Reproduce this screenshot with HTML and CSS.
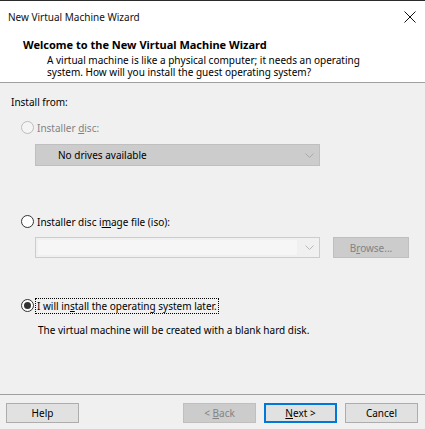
FILE: index.html
```html
<!DOCTYPE html>
<html>
<head>
<meta charset="utf-8">
<link rel="stylesheet" href="styles.css">
</head>
<body>
<div class="window">
  <div class="titlebar">
    <span class="title">New Virtual Machine Wizard</span>
    <svg class="close" width="12" height="12" viewBox="0 0 12 12"><path d="M0.5 0.5 L11.5 11.5 M11.5 0.5 L0.5 11.5" stroke="#111" stroke-width="1" fill="none"/></svg>
  </div>
  <div class="header">
    <div class="welcome">Welcome to the New Virtual Machine Wizard</div>
    <div class="desc">A virtual machine is like a physical computer; it needs an operating<br>system. How will you install the guest operating system?</div>
  </div>
  <div class="content">
    <div class="section-label">Install from:</div>

    <div class="radio-row disabled r1">
      <span class="radio"></span>
      <span class="label">Installer <u>d</u>isc:</span>
    </div>
    <div class="select disabled-select">
      <span class="select-text">No drives available</span>
      <svg class="chev" width="9" height="5" viewBox="0 0 9 5"><polyline points="0.5,0.5 4.5,4.5 8.5,0.5" fill="none" stroke="#a8a8a8" stroke-width="1"/></svg>
    </div>

    <div class="radio-row r2">
      <span class="radio"></span>
      <span class="label">Installer disc i<u>m</u>age file (iso):</span>
    </div>
    <div class="iso-row">
      <div class="combo">
        <div class="combo-edit"></div>
        <svg class="chev" width="9" height="5" viewBox="0 0 9 5"><polyline points="0.5,0.5 4.5,4.5 8.5,0.5" fill="none" stroke="#b8b8b8" stroke-width="1"/></svg>
      </div>
      <div class="btn btn-disabled browse"><span>B<u>r</u>owse...</span></div>
    </div>

    <div class="radio-row r3">
      <span class="radio checked"></span>
      <span class="label focus">I will in<u>s</u>tall the operating system later.</span>
    </div>
    <div class="later-desc">The virtual machine will be created with a blank hard disk.</div>
  </div>
  <div class="footer">
    <div class="btn help"><span>Help</span></div>
    <div class="spacer"></div>
    <div class="btn btn-disabled"><span>&lt; <u>B</u>ack</span></div>
    <div class="btn btn-default"><span><u>N</u>ext &gt;</span></div>
    <div class="btn"><span>Cancel</span></div>
  </div>
</div>
</body>
</html>
```

FILE: styles.css
```css
* { box-sizing: border-box; }
html, body {
  margin: 0;
  padding: 0;
  width: 425px;
  height: 429px;
  overflow: hidden;
  background: #f0f0f0;
  font-family: "Segoe UI", "Noto Sans", sans-serif;
  font-size: 10px;
  color: #000;
}
.window {
  width: 425px;
  height: 429px;
  display: flex;
  flex-direction: column;
  border-top: 1px solid #2b2b2b;
}
.titlebar {
  height: 31px;
  background: #fff;
  display: flex;
  align-items: center;
  padding-left: 8px;
  padding-right: 9px;
}
.title {
  font-size: 10px;
  flex: 1;
  margin-top: 1px;
  color: #111;
}
.header {
  height: 51px;
  background: #fff;
  border-bottom: 1px solid #a0a0a0;
  padding-top: 6px;
}
.welcome {
  font-weight: bold;
  font-size: 11px;
  padding-left: 23px;
  line-height: 14px;
}
.desc {
  padding-left: 47px;
  line-height: 12px;
  margin-top: 2px;
}
.content {
  flex: 1;
  display: flex;
  flex-direction: column;
}
.section-label {
  margin-top: 12px;
  padding-left: 11px;
  line-height: 14px;
}
.radio-row {
  display: flex;
  align-items: center;
  height: 13px;
  padding-left: 21px;
  line-height: 14px;
}
.r1 { margin-top: 12px; }
.r2 { margin-top: 49px; }
.r3 { margin-top: 41px; }
.radio {
  width: 13px;
  height: 13px;
  border-radius: 50%;
  border: 1px solid #333;
  background: #fff;
  position: relative;
  flex: none;
}
.radio.checked::after {
  content: "";
  position: absolute;
  left: 2px;
  top: 2px;
  width: 7px;
  height: 7px;
  border-radius: 50%;
  background: #333;
}
.disabled .radio {
  border-color: #bcbcbc;
  background: #f4f4f4;
}
.label {
  margin-left: 3px;
}
.disabled .label {
  color: #838383;
}
.label.focus {
  outline: 1px dotted #000;
  outline-offset: 0;
  padding: 0 1px;
  margin-left: 2px;
}
.select {
  margin-left: 35px;
  margin-top: 10px;
  width: 285px;
  height: 22px;
  display: flex;
  align-items: center;
  justify-content: space-between;
  padding-left: 22px;
  padding-right: 5px;
}
.disabled-select {
  background: #cccccc;
  border: 1px solid #bfbfbf;
}
.select-text {
  color: #000;
}
.iso-row {
  display: flex;
  margin-left: 35px;
  margin-top: 9px;
  height: 21px;
}
.combo {
  flex: none;
  width: 285px;
  height: 21px;
  border: 1px solid #cccccc;
  background: #f0f0f0;
  display: flex;
  align-items: center;
  padding: 2px 5px 2px 2px;
}
.combo-edit {
  flex: 1;
  height: 100%;
  background: #f6f6f6;
  margin-right: 8px;
}
.btn {
  flex: none;
  width: 73px;
  height: 20px;
  border: 1px solid #adadad;
  background: #e1e1e1;
  display: flex;
  align-items: center;
  justify-content: center;
  line-height: 14px;
  color: #000;
}
.btn-disabled {
  background: #cccccc;
  border-color: #bfbfbf;
  color: #838383;
}
.btn-default {
  border: 2px solid #0078d7;
}
.browse {
  margin-left: 13px;
  width: 76px;
  height: 21px;
}
.later-desc {
  padding-left: 38px;
  margin-top: 11px;
  line-height: 14px;
}
.footer {
  height: 35px;
  border-top: 1px solid #a0a0a0;
  display: flex;
  padding: 8px 7px 0 6px;
  gap: 8px;
}
.footer .spacer {
  flex: 1;
}
```
